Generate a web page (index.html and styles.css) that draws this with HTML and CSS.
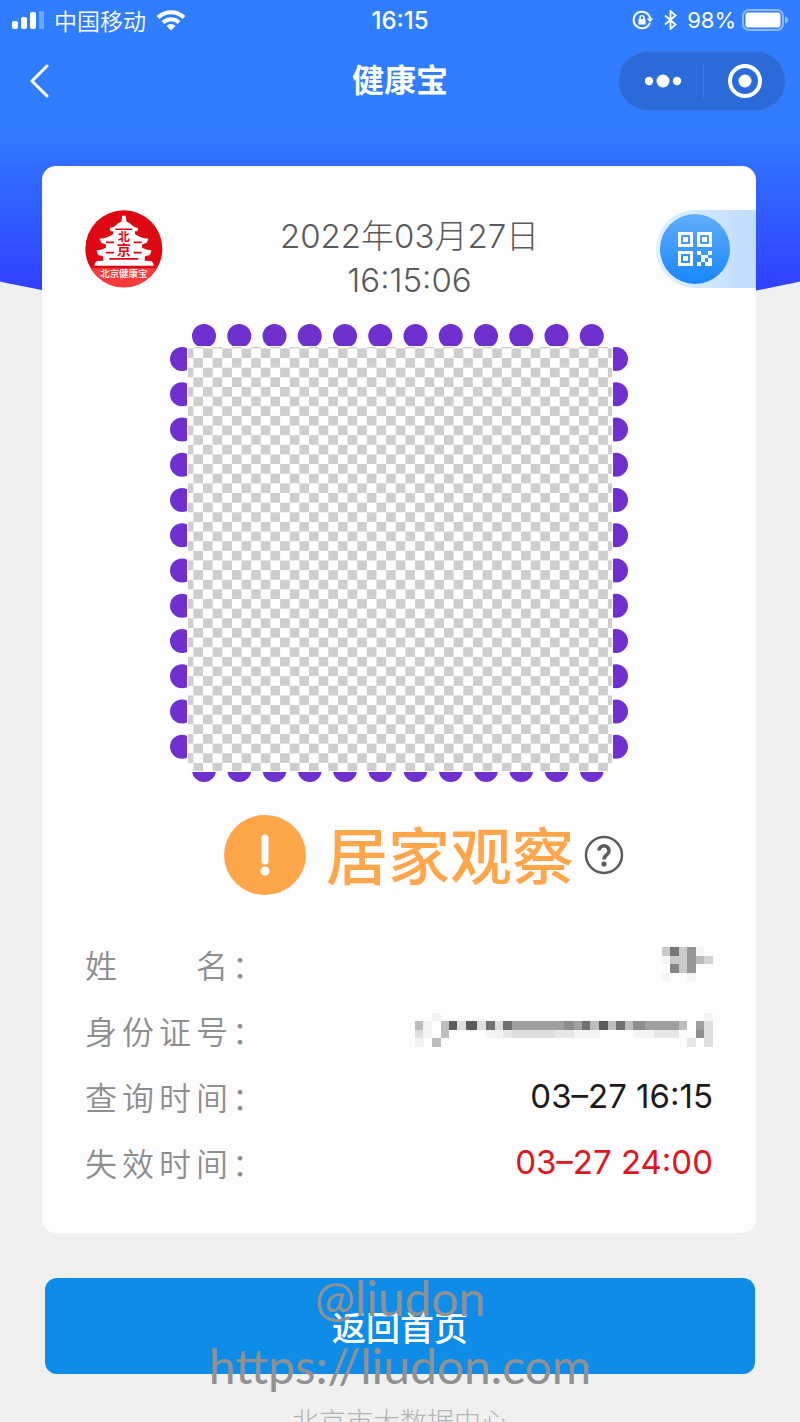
FILE: index.html
```
<!DOCTYPE html>
<html lang="zh-CN">
<head>
    <meta charset="UTF-8">
    <meta name="viewport" content="width=device-width, initial-scale=1.0">
    <title>健康宝</title>
    <link rel="stylesheet" href="styles.css">
</head>
<body>
<div class="page">
    <header class="top">
        <div class="status-bar">
            <div class="status-left">
                <svg width="32" height="18" viewBox="0 0 32 18" fill="#fff">
                    <rect x="0" y="10" width="6" height="8" rx="2"/>
                    <rect x="9" y="6" width="6" height="12" rx="2"/>
                    <rect x="18" y="1" width="6" height="17" rx="2"/>
                    <rect x="27" y="-3" width="6" height="21" rx="2" opacity=".3"/>
                </svg>
                <span>中国移动</span>
                <svg width="30" height="22" viewBox="0 0 30 22" fill="none" stroke="#fff" stroke-width="4">
                    <path d="M2 8.5a18.5 18.5 0 0 1 26 0"/>
                    <path d="M7 13.5a11.5 11.5 0 0 1 16 0"/>
                    <path d="M15 21.5l-4.5-4.6a6.5 6.5 0 0 1 9 0z" fill="#fff" stroke="none"/>
                </svg>
            </div>
            <span class="clock">16:15</span>
            <div class="status-right">
                <svg width="22" height="20" viewBox="0 0 22 20" fill="none" stroke="#fff" stroke-width="2">
                    <path d="M17.8 12.8a8.3 8.3 0 1 1 .4-4"/>
                    <path d="M14.8 8.5h6.4L18 12.6z" fill="#fff" stroke="none"/>
                    <rect x="6.5" y="9" width="7" height="5.5" fill="#fff" stroke="none"/>
                    <path d="M8 9.5V7.7a2 2 0 0 1 4 0v1.8" stroke-width="1.5"/>
                </svg>
                <svg width="13" height="20" viewBox="0 0 13 20" fill="none" stroke="#fff" stroke-width="1.8">
                    <path d="M1 5.5l10.5 9L6.5 19V1l5 4.5L1 14.5"/>
                </svg>
                <div class="battery">
                    <span>98%</span>
                    <svg width="46" height="22" viewBox="0 0 46 22" fill="#fff">
                        <rect x="1" y="1" width="40" height="20" rx="6" fill="none" stroke="#fff" stroke-width="2" opacity=".45"/>
                        <rect x="3.500" y="3.500" width="35" height="15" rx="3"/>
                        <path d="M43 7.500q3 1 3 3.500t-3 3.500z" opacity=".5"/>
                    </svg>
                </div>
            </div>
        </div>
        <nav class="nav-bar">
            <button class="back" type="button" aria-label="返回">
                <svg width="20" height="34" viewBox="0 0 20 34" fill="none" stroke="#fff" stroke-width="3" stroke-linecap="round" stroke-linejoin="round">
                    <path d="M17 2L2 17l15 15"/>
                </svg>
            </button>
            <h1>健康宝</h1>
            <div class="capsule">
                <button type="button" aria-label="更多">
                    <svg width="38" height="14" viewBox="0 0 38 14" fill="#fff">
                        <circle cx="5" cy="7" r="4.200"/>
                        <circle cx="19" cy="7" r="6.500"/>
                        <circle cx="33" cy="7" r="4.200"/>
                    </svg>
                </button>
                <button type="button" aria-label="关闭">
                    <svg width="36" height="36" viewBox="0 0 36 36">
                        <circle cx="18" cy="18" r="15" fill="none" stroke="#fff" stroke-width="4"/>
                        <circle cx="18" cy="18" r="6.500" fill="#fff"/>
                    </svg>
                </button>
            </div>
        </nav>
    </header>

    <main class="card">
        <div class="card-head">
            <svg class="logo" viewBox="46 31 231 231">
                <clipPath id="logo-clip"><circle cx="161" cy="146" r="114"/></clipPath>
                <g clip-path="url(#logo-clip)">
                    <rect x="46" y="31" width="231" height="231" fill="#dc0812"/>
                    <rect x="46" y="203" width="231" height="60" fill="#fb3a3c"/>
                </g>
                <path fill="#fff" d="M156 48h10l3 18 10 4q10 12 25 14l-3 10h-7v8q14 12 40 14l-5 12-14 5v10q10 7 28 8l-5 13-15 5v12l18 1q8 3 8 14H74q0-11 8-14l18-1v-12l-15-5-5-13q18-1 28-8v-10l-14-5-5-12q26-2 40-14v-8h-7l-3-10q15-2 25-14l10-4z"/>
                <g stroke="#dc0812" stroke-width="5" fill="none">
                    <path d="M136 88h50M108 127h24M190 127h24M108 157h24M190 157h24M118 176h86"/>
                </g>
                <text x="161" y="124" font-size="35" font-weight="700" text-anchor="middle" fill="#dc0812">北</text>
                <text x="161" y="164" font-size="42" font-weight="700" text-anchor="middle" fill="#dc0812">京</text>
                <text x="161" y="230" font-size="28" font-weight="500" text-anchor="middle" fill="#fff">北京健康宝</text>
            </svg>
            <div class="now">
                <div>2022年03月27日</div>
                <div>16:15:06</div>
            </div>
            <button class="scan" type="button" aria-label="二维码">
                <span>
                    <svg width="36" height="36" viewBox="0 0 36 36" fill="#fff">
                        <path fill="none" stroke="#fff" stroke-width="3" d="M2.500 2.500h12v12h-12zM21.500 2.500h12v12h-12zM2.500 21.500h12v12h-12z"/>
                        <path d="M6 6h5v5H6zM25 6h5v5h-5zM6 25h5v5H6zM20 20h4v4h-4zM31 20h4v4h-4zM24 24h4v7h-4zM28 24h3v3h-3zM20 31h4v4h-4zM28 31h3v-4h4v8h-7z"/>
                    </svg>
                </span>
            </button>
        </div>

        <svg class="code" viewBox="0 0 459 459">
            <defs>
                <pattern id="checks" x="13.700" y="24.400" width="19.280" height="19.280" patternUnits="userSpaceOnUse">
                    <rect width="19.280" height="19.280" fill="#fff"/>
                    <rect width="9.640" height="9.640" fill="#cecece"/>
                    <rect x="9.640" y="9.640" width="9.640" height="9.640" fill="#cecece"/>
                </pattern>
            </defs>
            <path fill="none" stroke="#7030d0" stroke-width="24" stroke-linecap="round" stroke-dasharray="0 35.250" d="M34 12h388M34 446h388M12 35v388M446 35v388"/>
            <rect x="17" y="22" width="426" height="426" fill="#fff"/>
            <rect x="18" y="23" width="424" height="424" fill="url(#checks)"/>
        </svg>

        <div class="result">
            <svg class="alert" viewBox="0 0 82 80">
                <ellipse cx="41" cy="40" rx="41" ry="40" fill="#ffa54a"/>
                <path d="M41 23v23" stroke="#fff" stroke-width="7" stroke-linecap="round"/>
                <circle cx="41" cy="56" r="4.500" fill="#fff"/>
            </svg>
            <strong>居家观察</strong>
            <button class="help" type="button" aria-label="说明">
                <svg width="40" height="40" viewBox="0 0 40 40" fill="none" stroke="#5c5c5c">
                    <circle cx="20" cy="20" r="18" stroke-width="2.500"/>
                    <path d="M15 15.500a5 4.800 0 1 1 8 4c-2 1.500-3 2.500-3 5" stroke-width="3.500"/>
                    <circle cx="20" cy="29" r="2.600" fill="#5c5c5c" stroke="none"/>
                </svg>
            </button>
        </div>

        <dl class="info">
            <div class="row">
                <dt><span>姓名</span>：</dt>
                <dd>
                    <svg width="52" height="34" viewBox="0 0 6 4" shape-rendering="crispEdges" role="img" aria-label="已隐藏">
                        <path fill="#cacaca" d="M0 0h1v1H0zM2 0h1v3H2zM1 1h1v1H1z"/>
                        <path fill="#777" d="M1 0h1v1H1z"/>
                        <path fill="#878787" d="M1 2h1v1H1z"/>
                        <path fill="#969696" d="M3 0h1v3H3z"/>
                        <path fill="#bababa" d="M4 1h1v1H4z"/>
                        <path fill="#d4d4d4" d="M5 1h1v1H5z"/>
                        <path fill="#f5f5f5" d="M0 1h1v1H0zM0 3h1v1H0zM3 3h1v1H3zM4 0h1v1H4z"/>
                    </svg>
                </dd>
            </div>
            <div class="row">
                <dt><span>身份证号</span>：</dt>
                <dd>
                    <svg width="298" height="34" viewBox="43 37 892 102" preserveAspectRatio="none" shape-rendering="crispEdges" role="img" aria-label="已隐藏">
                        <path fill="#f3f3f3" d="M94 37h26v25H94zM909 37h26v25h-26zM68 62h26v51H68zM43 113h26v25H43zM255 87h51v25h-51zM519 87h77v25h-77zM700 87h57v25h-57z"/>
                        <path fill="#dedede" d="M43 87h25v26H43zM170 62h26v25h-26zM230 62h25v25h-25zM281 62h25v25h-25zM332 87h130v25H332zM909 62h26v51h-26zM909 113h26v25h-26z"/>
                        <path fill="#e7e7e7" d="M306 87h26v25h-26zM462 87h57v25h-57zM757 87h75v25h-75zM858 113h26v25h-26z"/>
                        <path fill="#bdbdbd" d="M43 62h25v25H43zM120 62h25v51h-25zM94 113h26v25H94zM568 62h26v25h-26zM620 62h25v25h-25zM672 62h25v25h-25zM832 62h25v25h-25z"/>
                        <path fill="#9f9f9f" d="M332 62h211v25H332zM730 62h102v25H730zM884 62h25v25h-25z"/>
                        <path fill="#8d8d8d" d="M490 62h29v25h-29zM697 62h33v25h-33zM884 87h25v26h-25z"/>
                        <path fill="#707070" d="M255 62h26v25h-26zM306 62h26v25h-26zM543 62h25v25h-25zM645 62h27v25h-27z"/>
                        <path fill="#5c5c5c" d="M145 62h25v25h-25zM196 62h34v25h-34zM594 62h26v25h-26z"/>
                    </svg>
                </dd>
            </div>
            <div class="row">
                <dt><span>查询时间</span>：</dt>
                <dd>03–27 16:15</dd>
            </div>
            <div class="row expire">
                <dt><span>失效时间</span>：</dt>
                <dd>03–27 24:00</dd>
            </div>
        </dl>
    </main>

    <div class="actions">
        <button class="home" type="button">返回首页</button>
        <div class="watermark">
            <div>@liudon</div>
            <div>https://liudon.com</div>
        </div>
    </div>
    <footer>北京市大数据中心</footer>
</div>
</body>
</html>
```

FILE: styles.css
```
* {
    box-sizing: border-box;
}
body {
    margin: 0;
    background: #f0f0f0;
    font-family: Inter, "Noto Sans CJK SC", sans-serif;
}
.page {
    height: 100vh;
    overflow: hidden;
}
svg {
    display: block;
    flex-shrink: 0;
}
button {
    padding: 0;
    border: none;
    background: none;
    font-family: inherit;
    cursor: pointer;
}

/* blue header with curved bottom */
.top {
    height: 323px;
    background: linear-gradient(#307eff 120px, #3040ff 290px);
    clip-path: ellipse(102% 100% at 50% 0);
    color: #fff;
}
.status-bar,
.nav-bar {
    display: grid;
    grid-template-columns: 1fr auto 1fr;
    align-items: center;
}
.status-bar {
    height: 40px;
    padding: 0 12px;
    font-size: 22px;
}
.status-left,
.status-right {
    display: flex;
    align-items: center;
    gap: 10px;
}
.status-left {
    font-size: 23px;
    font-weight: 350;
}
.status-right {
    justify-content: flex-end;
}
.battery {
    display: flex;
    align-items: center;
    gap: 6px;
}
.clock {
    font-size: 24px;
    font-weight: 500;
}
.nav-bar {
    height: 82px;
    padding: 0 14px;
}
.back {
    justify-self: start;
    margin-left: 16px;
}
h1 {
    margin: 0;
    font-size: 32px;
    font-weight: 700;
    line-height: 40px;
}
.capsule {
    display: flex;
    justify-self: end;
    width: 168px;
    height: 60px;
    padding: 12px 0 12px 3px;
    border: 1px solid #3d78e0;
    border-radius: 30px;
    background: #2b6bd9;
}
.capsule button {
    display: flex;
    flex: 1;
    align-items: center;
    justify-content: center;
}
.capsule button + button {
    border-left: 1px solid #427ce0;
}

.card {
    position: relative;
    margin: -157px 44px 0 42px;
    padding: 44px 43px 36px;
    border-radius: 14px;
    background: #fdfdfd;
}
.card-head {
    display: flex;
    align-items: flex-start;
}
.logo {
    width: 78px;
    height: 78px;
}
.now {
    flex: 1;
    padding-top: 4px;
    color: #5a5a5a;
    font-size: 33px;
    font-weight: 300;
    line-height: 44px;
    text-align: center;
}
.scan {
    width: 100px;
    height: 78px;
    margin-right: -43px;
    padding: 4px;
    border-radius: 39px 0 0 39px;
    background: linear-gradient(90deg, #e2f1ff, #bedcff);
}
.scan span {
    display: flex;
    align-items: center;
    justify-content: center;
    width: 70px;
    height: 70px;
    border-radius: 50%;
    background: linear-gradient(#62adfa, #1787fb);
}
.code {
    width: 459px;
    max-width: 100%;
    margin: 22px auto 0;
}
.result {
    display: flex;
    align-items: center;
    justify-content: center;
    margin-top: 32px;
    padding-left: 50px;
}
.alert {
    width: 82px;
    height: 80px;
}
.result strong {
    margin: 0 10px 0 20px;
    padding-top: 6px;
    color: #ffa54a;
    font-size: 62px;
    font-weight: 500;
    line-height: 74px;
}

.info {
    margin: 36px 0 0;
    padding-bottom: 2px;
    font-size: 32px;
}
.row {
    display: flex;
    align-items: center;
    justify-content: space-between;
    height: 66px;
}
dt {
    display: flex;
    gap: 4px;
    color: #8e8e8e;
    font-weight: 350;
}
dt span {
    width: 143px;
    text-align: justify;
    text-align-last: justify;
}
dd {
    margin: 0;
    color: #1c1c1c;
    font-size: 33px;
}
.expire dd {
    color: #e0151d;
}

.actions {
    position: relative;
    margin: 45px 45px 0;
}
.home {
    width: 100%;
    height: 96px;
    border-radius: 12px;
    background: #0d8ce8;
    color: #fff;
    font-size: 34px;
    font-weight: 500;
}
.watermark {
    position: absolute;
    inset: -14px 0 auto;
    color: #919191;
    font-family: Lato, cursive;
    font-size: 48px;
    font-weight: 400;
    line-height: 68px;
    text-align: center;
    pointer-events: none;
}
footer {
    margin-top: 27px;
    color: #b5b5b5;
    font-size: 27px;
    font-weight: 300;
    text-align: center;
}
```
